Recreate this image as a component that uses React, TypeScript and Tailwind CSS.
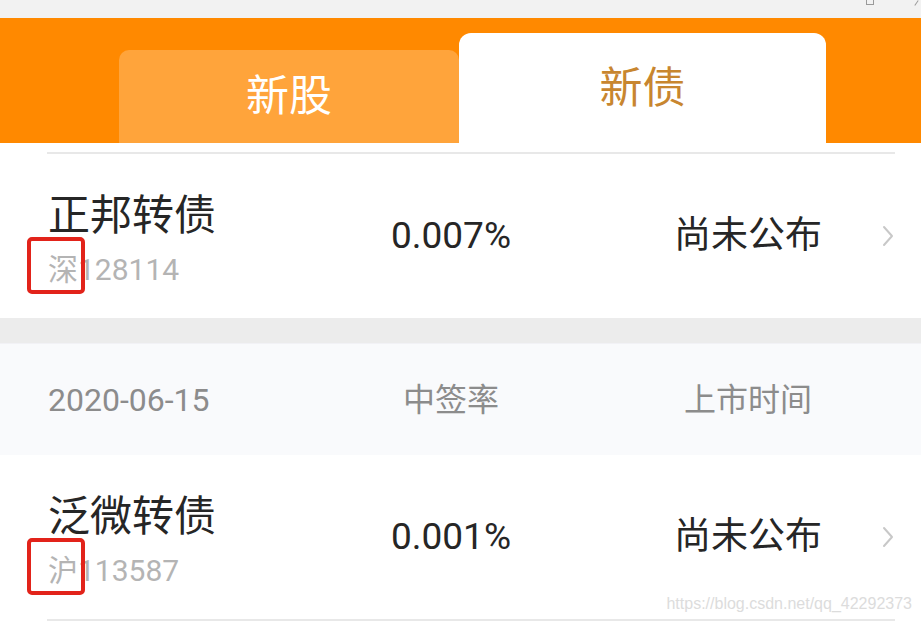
import React from "react";

type Bond = {
  name: string;
  market: string;
  code: string;
  rate: string;
  listing: string;
};

const bonds: Bond[] = [
  { name: "正邦转债", market: "深", code: "128114", rate: "0.007%", listing: "尚未公布" },
  { name: "泛微转债", market: "沪", code: "113587", rate: "0.001%", listing: "尚未公布" },
];

function Chevron() {
  return (
    <svg width="12" height="22" viewBox="0 0 12 22" fill="none" className="block">
      <path d="M2 2l8 9-8 9" stroke="#c8c8c8" strokeWidth="2" strokeLinecap="round" strokeLinejoin="round" />
    </svg>
  );
}

function BondRow({ bond }: { bond: Bond }) {
  return (
    <div className="flex h-[164px] items-center pl-[48px]">
      {/* name + code */}
      <div className="flex w-[290px] flex-col gap-[14px] pt-[10px]">
        <div className="text-[42px] leading-[44px] text-[#262626]">{bond.name}</div>
        <div className="relative text-[30px] leading-[36px] text-[#b4b4b4]">
          <span>{bond.market}</span>
          <span>{bond.code}</span>
          {/* red annotation box */}
          <div className="absolute left-[-21px] top-[-15px] h-[57px] w-[58px] rounded-[5px] border-4 border-[#e2231a]" />
        </div>
      </div>
      <div className="w-[226px] text-center text-[37px] leading-[40px] text-[#262626]">{bond.rate}</div>
      <div className="ml-[100px] w-[168px] text-center text-[37px] leading-[44px] text-[#262626]">{bond.listing}</div>
      <div className="ml-[50px]">
        <Chevron />
      </div>
    </div>
  );
}

export default function App() {
  return (
    <div className="relative h-[621px] w-[921px] overflow-hidden bg-white font-['Roboto','Noto_Sans_CJK_SC',sans-serif]">
      {/* status strip */}
      <div className="relative h-[18px] bg-[#f2f2f2]">
        <div className="absolute right-[47px] top-0 h-[5px] w-[8px] border-x border-b border-[#9a9a9a]" />
        <div className="absolute right-[4px] top-0 h-[6px] w-px rotate-[35deg] bg-[#9a9a9a]" />
      </div>

      {/* tabs */}
      <div className="flex h-[125px] items-end bg-[#ff8900] pl-[119px]">
        <div className="flex h-[93px] w-[340px] items-center justify-center rounded-t-[10px] bg-[#ffa43b] text-[43px] text-white">
          新股
        </div>
        <div className="flex h-[110px] w-[367px] items-center justify-center rounded-t-[12px] bg-white text-[43px] text-[#c8862f]">
          新债
        </div>
      </div>

      <div className="h-[9px]" />
      <div className="ml-[47px] w-[848px] border-t-2 border-[#e8e8e8]" />

      <BondRow bond={bonds[0]} />

      {/* separator + group header */}
      <div className="h-[26px] border-b border-[#f2f2f6] bg-[#ececec]" />
      <div className="flex h-[111px] items-center bg-[#f9fafc] pl-[48px] text-[32px] text-[#8c8c8c]">
        <div className="w-[290px] text-[32px]">2020-06-15</div>
        <div className="w-[226px] text-center">中签率</div>
        <div className="ml-[100px] w-[168px] text-center">上市时间</div>
      </div>

      <BondRow bond={bonds[1]} />
      <div className="ml-[47px] w-[848px] border-t-2 border-[#e8e8e8]" />

      {/* watermark */}
      <div className="absolute bottom-[7px] right-[9px] font-['Liberation_Sans',sans-serif] text-[16px] leading-[20px] text-[#dcdcdc]">
        https://blog.csdn.net/qq_42292373
      </div>
    </div>
  );
}
